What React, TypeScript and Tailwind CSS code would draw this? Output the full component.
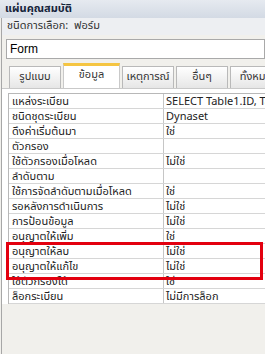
const rows: [string, string][] = [
  ["แหล่งระเบียน", "SELECT Table1.ID, Table1.Name FROM Table1;"],
  ["ชนิดชุดระเบียน", "Dynaset"],
  ["ดึงค่าเริ่มต้นมา", "ใช่"],
  ["ตัวกรอง", ""],
  ["ใช้ตัวกรองเมื่อโหลด", "ไม่ใช่"],
  ["ลำดับตาม", ""],
  ["ใช้การจัดลำดับตามเมื่อโหลด", "ใช่"],
  ["รอหลังการดำเนินการ", "ไม่ใช่"],
  ["การป้อนข้อมูล", "ไม่ใช่"],
  ["อนุญาตให้เพิ่ม", "ใช่"],
  ["อนุญาตให้ลบ", "ไม่ใช่"],
  ["อนุญาตให้แก้ไข", "ไม่ใช่"],
  ["ใช้ตัวกรองได้", "ใช่"],
  ["ล็อกระเบียน", "ไม่มีการล็อก"],
];

const tabs = ["รูปแบบ", "ข้อมูล", "เหตุการณ์", "อื่นๆ", "ทั้งหมด"];

export default function App() {
  return (
    <div
      className="relative w-[265px] h-[354px] overflow-hidden bg-[#f1f0ec] text-[#1e1e1e]"
      style={{ fontFamily: '"Noto Sans Thai", Tahoma, "Liberation Sans", "DejaVu Sans", sans-serif' }}
    >
      {/* Title */}
      <div className="h-[18px] bg-gradient-to-b from-[#e6eaf0] to-[#d3dae4] pl-[5px] text-[11px] font-bold leading-[18px] text-[#15233a] whitespace-nowrap">
        แผ่นคุณสมบัติ
      </div>

      <div className="ml-[1px] border-l border-[#a7a7a7]">
        <div className="h-[17px] bg-[#edeff2] pl-[5px] text-[11px] leading-[16px] text-[#333] whitespace-nowrap">
          ชนิดการเลือก:&nbsp; ฟอร์ม
        </div>

        {/* Combo */}
        <div className="pt-[4px] pl-[4px]">
          <div
            className="h-[20px] border border-[#a9a9a9] bg-white pl-[3px] text-[12px] leading-[18px] text-black"
            style={{ fontFamily: '"Liberation Sans", sans-serif' }}
          >
            Form
          </div>
        </div>

        {/* Tabs */}
        <div className="mt-[5px] flex h-[24px] items-end gap-[2px] pl-[7px] whitespace-nowrap">
          {tabs.map((t, i) =>
            i === 1 ? (
              <div
                key={t}
                className="flex h-[25px] w-[57px] shrink-0 items-center justify-center border-x border-t-[3px] border-x-[#c9c9c9] border-t-[#f5c542] bg-white pb-[3px] text-[11px] text-[#333]"
              >
                {t}
              </div>
            ) : (
              <div
                key={t}
                className="flex h-[22px] w-[52px] shrink-0 items-center justify-center border border-b-0 border-[#b9b9b9] bg-gradient-to-b from-[#ffffff] to-[#e6e6e6] text-[11px] text-[#333]"
              >
                {t}
              </div>
            )
          )}
        </div>

        {/* Property grid */}
        <div className="border-t border-[#c9c9c9] bg-white pt-[4px] pl-[6px]">
          <div className="border-l border-t border-[#b8b8b8]">
            {rows.map(([label, value]) => (
              <div key={label} className="flex h-[15px] border-b border-[#d6d6d6] text-[11px] leading-[15px] whitespace-nowrap">
                <div className="w-[155px] shrink-0 overflow-hidden border-r border-[#c6c6c6] pl-[3px] text-[#222]">
                  {label}
                </div>
                <div className="min-w-0 flex-1 overflow-hidden pl-[2px] text-[#222]">
                  {value}
                </div>
              </div>
            ))}
          </div>
        </div>
        <div className="h-[60px] bg-[#f1f0ec]" />
      </div>

      {/* Annotation box */}
      <div className="absolute left-[6px] top-[242px] h-[38px] w-[257px] border-[3px] border-[#e3000f]" />
    </div>
  );
}
